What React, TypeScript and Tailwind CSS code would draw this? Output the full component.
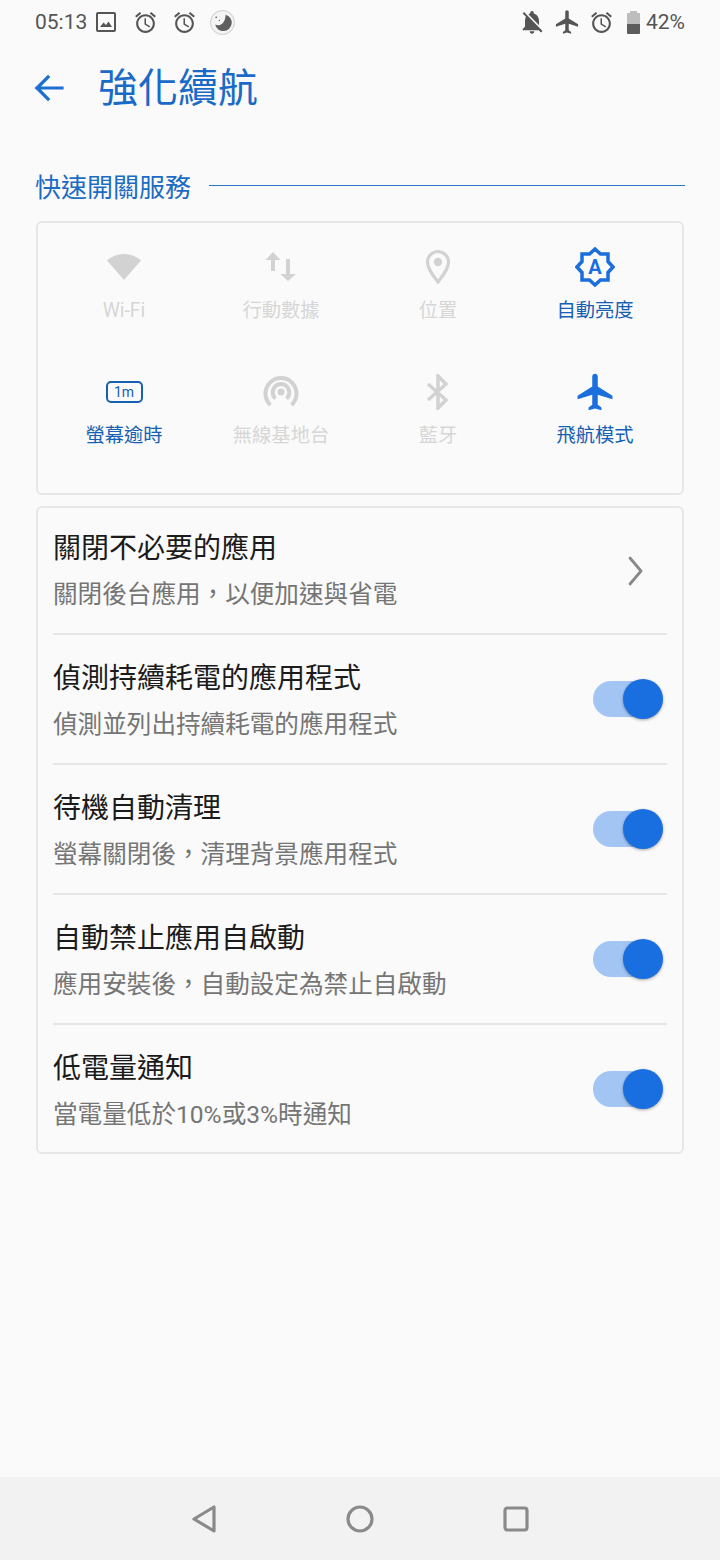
import { ReactNode } from 'react';

const FONT = 'font-["Roboto","Noto_Sans_CJK_TC",sans-serif]';

const Plane = ({ className }: { className?: string }) => (
  <svg viewBox="-0.5 0 24 24" className={className} fill="currentColor">
    <path d="M21 16v-2l-8-5V3.500c0-.83-.67-1.500-1.500-1.500S10 2.670 10 3.500V9l-8 5v2l8-2.500V19l-2 1.500V22l3.500-1 3.500 1v-1.500L13 19v-5.500l8 2.500z" />
  </svg>
);

const Alarm = ({ className }: { className?: string }) => (
  <svg viewBox="0 0 24 24" className={className} fill="currentColor">
    <path d="M22 5.720l-4.600-3.860-1.290 1.530 4.600 3.860L22 5.720zM7.880 3.390L6.600 1.860 2 5.710l1.290 1.530 4.590-3.850zM12.500 8H11v6l4.750 2.850.75-1.230-4-2.370V8zM12 4c-4.970 0-9 4.030-9 9s4.030 9 9 9 9-4.030 9-9-4.030-9-9-9zm0 16c-3.870 0-7-3.130-7-7s3.130-7 7-7 7 3.130 7 7-3.130 7-7 7z" />
  </svg>
);

const BellOff = ({ className }: { className?: string }) => (
  <svg viewBox="0 0 24 24" className={className} fill="currentColor">
    <path d="M20 18.690L7.840 6.140 5.270 3.490 4 4.760l2.800 2.800v.010c-.52.990-.8 2.160-.8 3.420v5l-2 2v1h13.730l2 2L21 19.720l-1-1.030zM12 22c1.110 0 2-.89 2-2h-4c0 1.110.89 2 2 2zm6-7.320V11c0-3.080-1.640-5.640-4.500-6.320V4c0-.83-.67-1.500-1.500-1.500s-1.500.67-1.500 1.500v.68c-.15.030-.29.080-.42.120-.1.030-.2.070-.3.110h-.01c-.2.080-.4.170-.59.270-.1.050-.2.100-.3.160L18 14.680z" />
  </svg>
);

function StatusBar() {
  return (
    <div className="flex h-[44px] items-center justify-between px-[35px] text-[#555555]">
      <div className="flex items-center">
        <span className="text-[21px] leading-none">05:13</span>
        <svg viewBox="0 0 20 20" className="ml-[9px] h-[20px] w-[20px]" fill="none">
          <rect x="1" y="1" width="18" height="18" rx="1" stroke="currentColor" strokeWidth="2" />
          <path d="M4 15l3.500-4.500 2.500 2.500 2.500-3.500 3.500 5.500z" fill="currentColor" />
        </svg>
        <Alarm className="ml-[17px] h-[25px] w-[25px]" />
        <Alarm className="ml-[14px] h-[25px] w-[25px]" />
        <div className="ml-[13px] flex h-[25px] w-[25px] items-center justify-center rounded-full border border-[#cccccc] bg-[#f4f4f4]">
          <svg viewBox="0 0 20 20" className="h-[21px] w-[21px]" fill="#5f5f5f">
            <path d="M13 2.500a8 8 0 1 1-10 9.500c3.500 2 9.500 0 10-9.500z" />
            <circle cx="4" cy="5" r="0.800" />
            <circle cx="7" cy="8" r="0.600" />
          </svg>
        </div>
      </div>
      <div className="flex items-center">
        <BellOff className="h-[28px] w-[28px]" />
        <Plane className="ml-[7px] h-[28px] w-[28px]" />
        <Alarm className="ml-[8px] h-[25px] w-[25px]" />
        <div className="ml-[13px] flex h-[23px] w-[13px] flex-col">
          <div className="mx-auto h-[2px] w-[7px] bg-[#bdbdbd]" />
          <div className="h-[11px] bg-[#bdbdbd]" />
          <div className="h-[10px] rounded-b-[1px] bg-[#5c5c5c]" />
        </div>
        <span className="ml-[6px] text-[21px] leading-none">42%</span>
      </div>
    </div>
  );
}

function Tile({ label, on, icon }: { label: string; on?: boolean; icon: ReactNode }) {
  return (
    <div className="flex h-[125px] flex-col items-center">
      <div className={`flex h-[48px] items-center justify-center ${on ? 'text-[#1a6fdc]' : 'text-[#d2d2d2]'}`}>{icon}</div>
      <div className={`mt-[6px] text-[19.300px] leading-[28px] ${on ? 'text-[#1560b4]' : 'text-[#d6d6d6]'}`}>{label}</div>
    </div>
  );
}

function Row({ title, sub, toggle, first, last }: { title: string; sub: string; toggle?: boolean; first?: boolean; last?: boolean }) {
  const height = first ? 'h-[127px] pt-[21px]' : last ? 'h-[127px] pt-[24px]' : 'h-[130px] pt-[24px]';
  return (
    <div className={`flex items-start ${height} ${last ? '' : 'border-b-2 border-[#e6e6e6]'}`}>
      <div className="min-w-0 flex-1">
        <div className="text-[28px] leading-[40px] text-[#1b1b1b]">{title}</div>
        <div className="mt-[8px] text-[24.600px] leading-[36px] text-[#757575]">{sub}</div>
      </div>
      {toggle ? (
        <div className="relative mr-[6px] mt-[22px] h-[36px] w-[68px] rounded-full bg-[#a3c5f3]">
          <div className="absolute right-[-2px] top-[-2px] h-[40px] w-[40px] rounded-full bg-[#1a6fe0] shadow-[0_1px_3px_rgba(0,0,0,0.35)]" />
        </div>
      ) : (
        <svg viewBox="0 0 16 30" className="mr-[24px] mt-[27px] h-[30px] w-[16px]" fill="none" stroke="#888888" strokeWidth="2.800" strokeLinecap="round" strokeLinejoin="round">
          <path d="M3 2l11 13L3 28" />
        </svg>
      )}
    </div>
  );
}

export default function App() {
  return (
    <div className={`flex h-[1560px] w-[720px] flex-col bg-[#fafafa] ${FONT}`}>
      <StatusBar />

      <div className="flex h-[88px] items-center pl-[34px]">
        <svg viewBox="0 0 30 30" className="h-[30px] w-[30px]" fill="none" stroke="#1a6fd0" strokeWidth="3.200" strokeLinecap="square">
          <path d="M28 15H3M14 4L3 15l11 11" />
        </svg>
        <h1 className="ml-[34px] pt-[2px] text-[40px] font-normal leading-none text-[#1a6ac8]">強化續航</h1>
      </div>

      <div className="mt-[31px] flex h-[44px] items-center pl-[35px] pr-[35px]">
        <span className="pt-[6px] text-[26px] leading-none text-[#1c6cc4]">快速開關服務</span>
        <div className="ml-[18px] h-px flex-1 bg-[#2a75c8]" />
      </div>

      <div className="mx-[36px] mt-[14px] h-[274px] rounded-[6px] border-2 border-[#e6e6e6] pl-[7.500px] pr-[8.500px] pt-[20px]">
        <div className="grid grid-cols-4">
          <Tile
            label="Wi-Fi"
            icon={
              <svg viewBox="0 0 36 28" className="h-[28px] w-[36px]" fill="currentColor">
                <path d="M18 27L1 7.500C5.500 3.500 11.500 1 18 1s12.500 2.500 17 6.500z" />
              </svg>
            }
          />
          <Tile
            label="行動數據"
            icon={
              <svg viewBox="0 0 32 32" className="h-[32px] w-[32px]" fill="currentColor">
                <path d="M8 1l7.500 8H10v11H6V9H.5zM21 8h4v15h6l-8 7-7.500-7H21z" />
              </svg>
            }
          />
          <Tile
            label="位置"
            icon={
              <svg viewBox="0 0 26 36" className="h-[36px] w-[26px]" fill="none" stroke="currentColor" strokeWidth="3.200">
                <path d="M13 33C8 26 2.500 20 2.500 13a10.500 10.500 0 0 1 21 0C23.500 20 18 26 13 33z" />
                <circle cx="13" cy="13" r="4.200" fill="currentColor" stroke="none" />
              </svg>
            }
          />
          <Tile
            label="自動亮度"
            on
            icon={
              <svg viewBox="0 0 40 40" className="h-[40px] w-[40px]" fill="none">
                <path d="M20 2l5.500 5H33v7.500l5 5.500-5 5.500V33h-7.500L20 38l-5.500-5H7v-7.500L2 20l5-5.500V7h7.500z" stroke="currentColor" strokeWidth="3.500" />
                <text x="20" y="27" textAnchor="middle" fontSize="20" fontWeight="700" fill="currentColor">A</text>
              </svg>
            }
          />
          <Tile
            label="螢幕逾時"
            on
            icon={
              <div className="flex h-[22px] w-[37px] items-center justify-center rounded-[5px] border-2 border-[#1560b4] text-[14px] leading-none text-[#1560b4]">
                1m
              </div>
            }
          />
          <Tile
            label="無線基地台"
            icon={
              <svg viewBox="0 0 36 36" className="h-[36px] w-[36px]" fill="none" stroke="currentColor" strokeWidth="4">
                <path d="M7.500 31a15.500 15.500 0 1 1 21 0" />
                <path d="M12.500 24.500a8.300 8.300 0 1 1 11 0" />
                <circle cx="18" cy="18" r="3.500" fill="currentColor" stroke="none" />
              </svg>
            }
          />
          <Tile
            label="藍牙"
            icon={
              <svg viewBox="0 0 24 36" className="h-[36px] w-[24px]" fill="none" stroke="currentColor" strokeWidth="3.500">
                <path d="M2 10l18 16-8 8V2l8 8L2 26" />
              </svg>
            }
          />
          <Tile label="飛航模式" on icon={<Plane className="h-[44px] w-[44px]" />} />
        </div>
      </div>

      <div className="mx-[36px] mt-[11px] rounded-[6px] border-2 border-[#e6e6e6] px-[15px]">
        <Row first title="關閉不必要的應用" sub={'關閉後台應用\uFF0C以便加速與省電'} />
        <Row title="偵測持續耗電的應用程式" sub="偵測並列出持續耗電的應用程式" toggle />
        <Row title="待機自動清理" sub={'螢幕關閉後\uFF0C清理背景應用程式'} toggle />
        <Row title="自動禁止應用自啟動" sub={'應用安裝後\uFF0C自動設定為禁止自啟動'} toggle />
        <Row last title="低電量通知" sub="當電量低於10%或3%時通知" toggle />
      </div>

      <div className="mt-auto flex h-[83px] items-center justify-center gap-[128px] bg-[#f2f2f2] pr-[1px] text-[#8a8a8a]">
        <svg viewBox="0 0 26 30" className="h-[30px] w-[26px]" fill="none" stroke="currentColor" strokeWidth="3.200" strokeLinejoin="round">
          <path d="M23 3v24L3 15z" />
        </svg>
        <svg viewBox="0 0 30 30" className="h-[30px] w-[30px]" fill="none" stroke="currentColor" strokeWidth="3.200">
          <circle cx="15" cy="15" r="12" />
        </svg>
        <svg viewBox="0 0 26 26" className="h-[26px] w-[26px]" fill="none" stroke="currentColor" strokeWidth="3.200">
          <rect x="2" y="2" width="22" height="22" rx="2.500" />
        </svg>
      </div>
    </div>
  );
}
